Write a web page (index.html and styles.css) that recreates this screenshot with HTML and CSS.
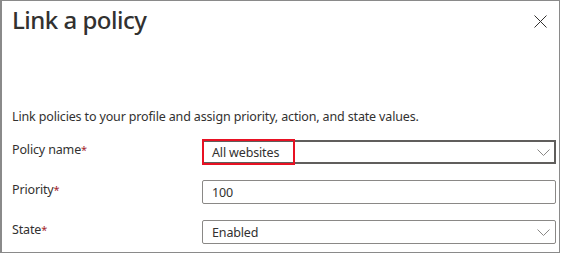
FILE: index.html
```html
<!DOCTYPE html>
<html>
<head>
  <title>Link a policy</title>
  <meta charset="UTF-8">
  <link rel="stylesheet" href="styles.css">
</head>
<body>
  <div class="panel">
    <div class="header">
      <h1>Link a policy</h1>
      <button class="close-btn" aria-label="Close">
        <svg width="13" height="13" viewBox="0 0 13 13">
          <path d="M0.5 0.5 L12.5 12.5 M12.5 0.5 L0.5 12.5" stroke="#323130" stroke-width="1" fill="none"/>
        </svg>
      </button>
    </div>

    <p class="description">Link policies to your profile and assign priority, action, and state values.</p>

    <div class="form">
      <div class="field">
        <label class="label">Policy name<span class="required">*</span></label>
        <div class="control select focused">
          <span class="value">All websites</span>
          <svg class="chevron" width="13" height="7" viewBox="0 0 13 7">
            <path d="M0.5 0.5 L6.5 6.5 L12.5 0.5" stroke="#8a8886" stroke-width="1" fill="none"/>
          </svg>
          <span class="highlight"></span>
        </div>
      </div>

      <div class="field">
        <label class="label">Priority<span class="required">*</span></label>
        <div class="control">
          <span class="value">100</span>
        </div>
      </div>

      <div class="field">
        <label class="label">State<span class="required">*</span></label>
        <div class="control select">
          <span class="value">Enabled</span>
          <svg class="chevron" width="13" height="7" viewBox="0 0 13 7">
            <path d="M0.5 0.5 L6.5 6.5 L12.5 0.5" stroke="#8a8886" stroke-width="1" fill="none"/>
          </svg>
        </div>
      </div>
    </div>
  </div>
</body>
</html>
```

FILE: styles.css
```css
:root {
  --text-color: #323130;
  --frame: #8a8a8a;
  --input-border: #8a8886;
  --input-focus: #605e5c;
  --required: #a4262c;
}

* {
  box-sizing: border-box;
  margin: 0;
  padding: 0;
}

body {
  font-family: 'Noto Sans', 'Open Sans', sans-serif;
  background-color: #fff;
  color: var(--text-color);
  width: 561px;
  height: 254px;
  overflow: hidden;
}

.panel {
  width: 560px;
  height: 253px;
  border: 1px solid var(--frame);
  border-left-width: 2px;
  padding: 0 3px 0 10px;
}

.header {
  display: flex;
  justify-content: space-between;
  align-items: flex-start;
  height: 42px;
  padding-top: 3px;
}

h1 {
  font-size: 24px;
  font-weight: 500;
  line-height: 32px;
  letter-spacing: -0.5px;
}

.close-btn {
  background: none;
  border: none;
  margin-top: 11px;
  margin-right: 9px;
  width: 13px;
  height: 13px;
  display: flex;
}

.description {
  font-size: 12.5px;
  line-height: 20px;
  margin-top: 64px;
  letter-spacing: -0.15px;
}

.form {
  display: flex;
  flex-direction: column;
  gap: 16px;
  margin-top: 13px;
}

.field {
  display: grid;
  grid-template-columns: 190px 1fr;
  align-items: start;
}

.label {
  font-size: 12.5px;
  line-height: 20px;
  letter-spacing: -0.15px;
}

.required {
  color: var(--required);
  font-size: 11px;
}

.control {
  position: relative;
  height: 24px;
  border: 1px solid var(--input-border);
  border-radius: 2px;
  display: flex;
  align-items: center;
  justify-content: space-between;
  padding: 0 5px 0 9px;
  font-size: 12.5px;
  letter-spacing: -0.15px;
}

.control.focused {
  border: 2px solid var(--input-focus);
  border-radius: 0;
  padding-left: 8px;
  padding-right: 4px;
}

.chevron {
  flex-shrink: 0;
}

.highlight {
  position: absolute;
  left: -2px;
  top: -3px;
  width: 93px;
  height: 26px;
  border: 2px solid #e81123;
}
```
